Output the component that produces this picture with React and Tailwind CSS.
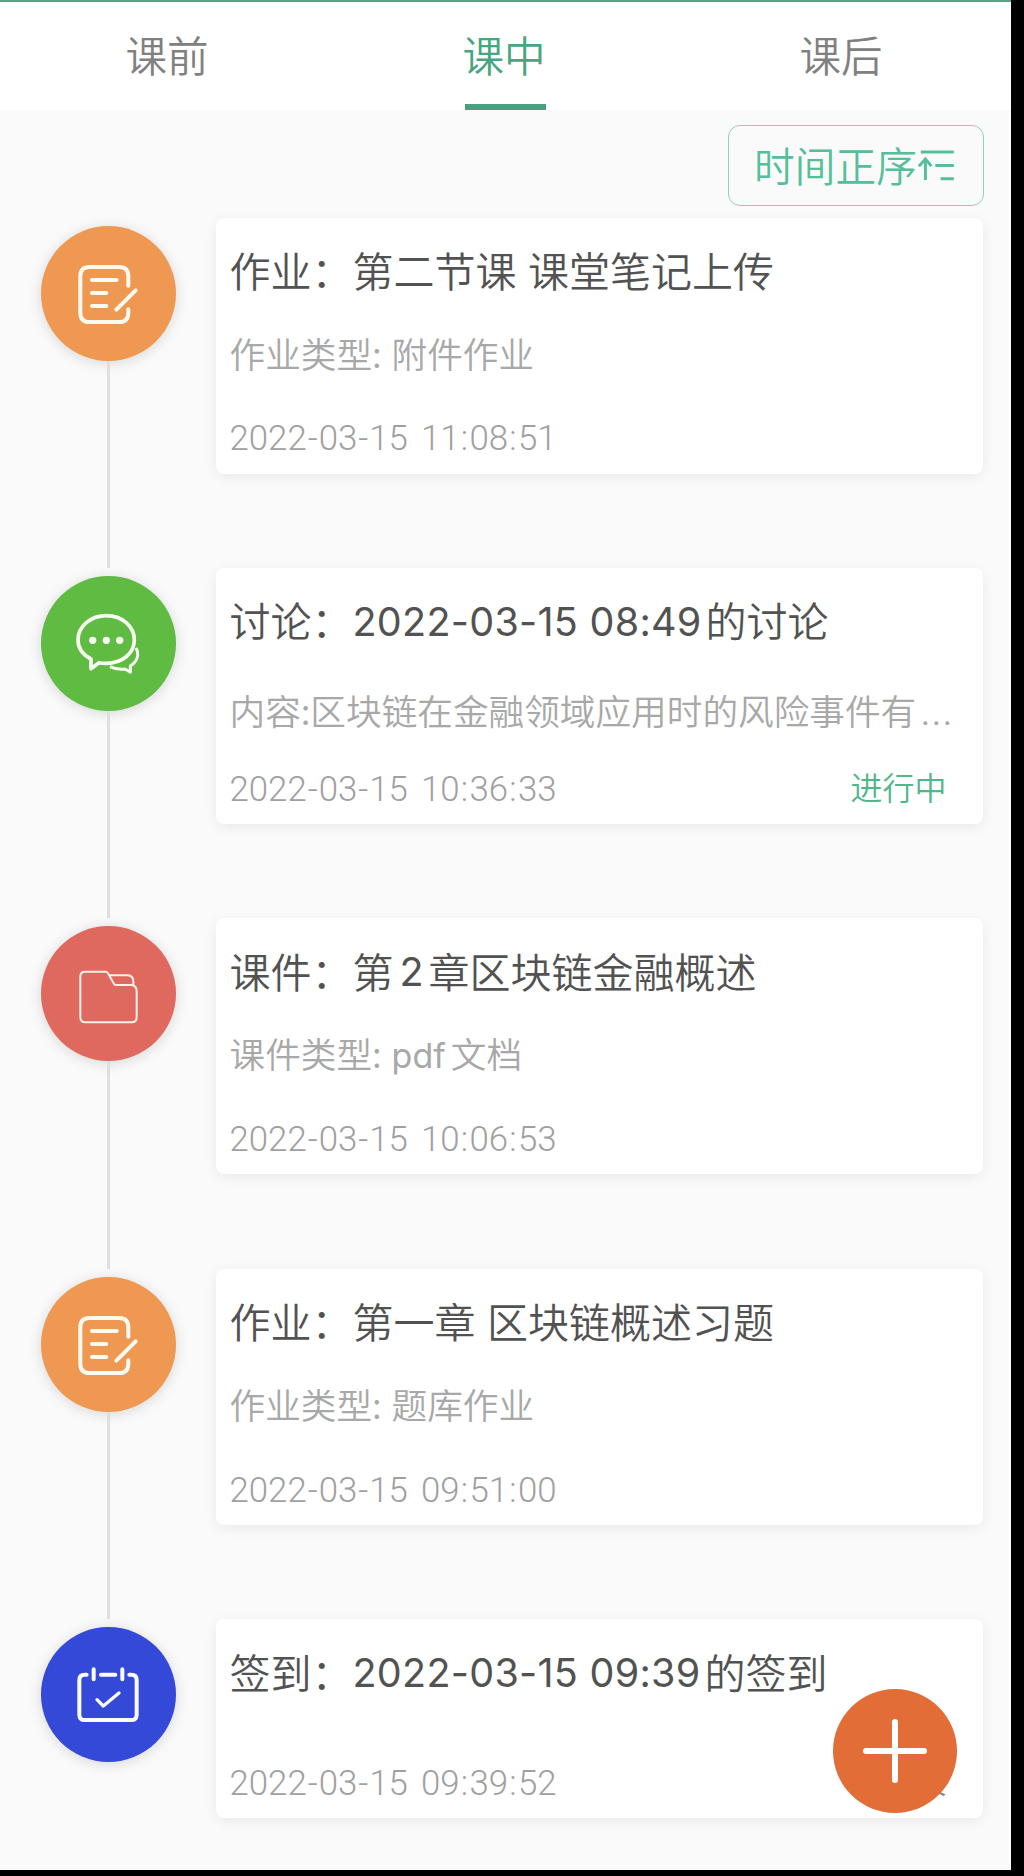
const CJK = `font-['Noto_Sans_CJK_SC',sans-serif]`;

function NoteIcon() {
  return (
    <svg viewBox="62 46 405 405" className="size-full" fill="none" stroke="#fffaf0" strokeWidth="12" strokeLinecap="round" strokeLinejoin="round">
      <path d="M324 225V197Q324 169 296 169H208Q180 169 180 197V306Q180 334 208 334H296Q324 334 324 306V296" />
      <path d="M215 208H289M215 247H258M215 286H258M288 297L346 239" />
    </svg>
  );
}

function ChatIcon() {
  return (
    <svg viewBox="62 48 405 405" className="size-full" fill="none" stroke="#f7fff0" strokeWidth="11" strokeLinejoin="round">
      <path d="M212 297C187 284 173 264 173 240C173 199 211 167 258 167C305 167 342 199 342 240C342 281 305 310 258 310C250 310 243 310 236 308L212 326Z" />
      <path d="M347 264C357 282 353 302 330 318V337L314 327C297 329 283 327 269 320" strokeWidth="9" />
      <g fill="#f7fff0" stroke="none">
        <circle cx="217" cy="241" r="11" />
        <circle cx="258" cy="241" r="11" />
        <circle cx="298" cy="241" r="11" />
      </g>
    </svg>
  );
}

function FolderIcon() {
  return (
    <svg viewBox="62 48 405 405" className="size-full" fill="none" stroke="#fff0e8" strokeWidth="6" strokeLinejoin="round">
      <path d="M194 185H256Q260 185 263 190L280 220Q282 225 288 225H332Q349 226 349 243V322Q349 337 334 337H195Q180 337 180 322V199Q180 185 194 185Z" />
      <path d="M266 196H322Q339 197 339 214V226" />
    </svg>
  );
}

function CalendarIcon() {
  return (
    <svg viewBox="62 81 405 405" className="size-full" fill="none" stroke="#fafaff" strokeWidth="12" strokeLinecap="round" strokeLinejoin="round">
      <path d="M199 224H193Q177 224 177 240V344Q177 360 193 360H333Q349 360 349 344V240Q349 224 333 224H327" />
      <path d="M220 208V238M306 208V238M242 224H285" />
      <path d="M230 299L249 318L296 279" strokeWidth="10" />
    </svg>
  );
}

function SortIcon() {
  return (
    <svg viewBox="0 0 108 100" className="h-[33px] w-9" fill="none" stroke="#55bf9b" strokeWidth="9">
      <path d="M8 9H108M52 50H108M68 90H108M22 94V30M2 52L22 30L40 52" />
    </svg>
  );
}

const items = [
  {
    icon: NoteIcon,
    color: "bg-[#ee9851]",
    title: ["作业：第二节课 课堂笔记上传"],
    sub: "作业类型: 附件作业",
    time: "2022-03-15 11:08:51",
  },
  {
    icon: ChatIcon,
    color: "bg-[#5fbb42]",
    title: ["讨论：", "2022-03-15 08:49", "的讨论"],
    sub: "内容:区块链在金融领域应用时的风险事件有",
    lowSub: true,
    more: true,
    time: "2022-03-15 10:36:33",
    status: "进行中",
    statusColor: "text-[#4fb78c]",
  },
  {
    icon: FolderIcon,
    color: "bg-[#e0695f]",
    title: ["课件：第", "2", "章区块链金融概述"],
    sub: "课件类型: ",
    subLatin: "pdf",
    subEnd: "文档",
    time: "2022-03-15 10:06:53",
  },
  {
    icon: NoteIcon,
    color: "bg-[#ee9851]",
    title: ["作业：第一章 区块链概述习题"],
    sub: "作业类型: 题库作业",
    time: "2022-03-15 09:51:00",
  },
  {
    icon: CalendarIcon,
    color: "bg-[#3449d8]",
    title: ["签到：", "2022-03-15 09:39", "的签到"],
    time: "2022-03-15 09:39:52",
    status: "已结束",
    statusColor: "text-[#888888]",
  },
];

const separatorWidth = {
  "-": "inline-block w-[12px] text-center",
  ":": "inline-block w-[9.9px] text-center",
  " ": "inline-block w-[13px] whitespace-pre",
};

function Timestamp({ value }) {
  return (
    <time className="whitespace-nowrap font-['Roboto',sans-serif] text-[34.8px] font-light text-[#a0a0a0]">
      {value.split(/([-: ])/).map((part, i) => (
        <span key={i} className={separatorWidth[part]}>
          {part}
        </span>
      ))}
    </time>
  );
}

function Item({ item, last }) {
  const Icon = item.icon;
  const [start, latin, end] = item.title;
  return (
    <li className={last ? "flex h-[199px]" : "flex h-[350.4px]"}>
      <div className="ml-[40.6px] mr-[40.4px] flex w-[135px] shrink-0 flex-col items-center pt-2">
        <div className={`size-[135px] shrink-0 rounded-full shadow-[0_2px_14px_rgba(0,0,0,0.14)] ${item.color}`}>
          <Icon />
        </div>
        {!last && <div className="w-[3px] flex-1 bg-[#e0dfde]" />}
      </div>
      <div
        className={`flex w-[767.5px] flex-col rounded-lg bg-white pl-[13.5px] pr-8 shadow-[0_3px_14px_rgba(0,0,0,0.07)] ${
          last ? "h-[199px]" : "h-[256px]"
        }`}
      >
        <h2 className="mt-[24px] flex h-[60px] items-center whitespace-pre text-[41px] font-[350] leading-[60px] text-[#525252] [word-spacing:2.4px]">
          <span className="pb-[5px]">{start}</span>
          {latin && (
            <span
              className={`font-['Inter',sans-serif] text-[39.5px] font-[380] [word-spacing:0px] ${
                latin.length > 1 ? "mr-1 tracking-[0.27px]" : "ml-1.5 mr-[5px]"
              }`}
            >
              {latin}
            </span>
          )}
          {end && <span className="pb-[5px]">{end}</span>}
        </h2>
        {item.sub && (
          <p
            className={`h-[52px] whitespace-nowrap text-[35.65px] font-[350] leading-[52px] text-[#a8a8a8] [word-spacing:2px] ${
              item.lowSub ? "mt-[32px]" : "mt-[25px]"
            }`}
          >
            {item.sub}
            {item.more && <span className="ml-1 font-['Inter',sans-serif] tracking-[1px]">...</span>}
            {item.subLatin && (
              <span className="mr-[5px] font-['Inter',sans-serif] text-[34px] font-normal">{item.subLatin}</span>
            )}
            {item.subEnd}
          </p>
        )}
        <div className="mb-[11px] mt-auto flex h-[48px] items-center justify-between pr-[5px]">
          <Timestamp value={item.time} />
          {item.status && (
            <span className={`pb-[6px] text-[32px] font-[350] leading-[48px] ${item.statusColor}`}>{item.status}</span>
          )}
        </div>
      </div>
    </li>
  );
}

const tabs = ["课前", "课中", "课后"];

export default function App() {
  return (
    <div className={`h-[1876px] w-[1024px] overflow-hidden bg-black ${CJK}`}>
      <main className="relative h-[1870px] w-[1011px] bg-[#fafafa]">
        <nav className="grid h-[110px] grid-cols-3 border-t-2 border-[#5ba387] bg-white">
          {tabs.map((tab) => (
            <button
              key={tab}
              className={`flex flex-col items-center text-[41.5px] font-[350] leading-[60px] ${
                tab === "课中" ? "text-[#46a680]" : "text-[#808080]"
              }`}
            >
              <span className="-ml-[3px] mt-[22px]">{tab}</span>
              {tab === "课中" && <span className="mt-auto h-1.5 w-[81px] bg-[#4f9d7f]" />}
            </button>
          ))}
        </nav>
        <div className="flex justify-end pr-[27px] pt-[15px]">
          <button className="flex h-[81px] w-[256px] items-center justify-center gap-px rounded-xl border border-[#90cfb8] pr-[4px] text-[40.7px] font-[350] leading-none text-[#55bf9b]">
            <span>时间正序</span>
            <SortIcon />
          </button>
        </div>
        <ul className="mt-[11.5px]">
          {items.map((item, i) => (
            <Item key={item.time} item={item} last={i === items.length - 1} />
          ))}
        </ul>
        <button className="absolute left-[833px] top-[1689px] flex size-[124px] items-center justify-center rounded-full bg-[#e36d37]">
          <svg viewBox="0 0 64 64" className="size-16" stroke="white" strokeWidth="6" strokeLinecap="round">
            <path d="M32 3V61M3 32H61" />
          </svg>
        </button>
      </main>
    </div>
  );
}
